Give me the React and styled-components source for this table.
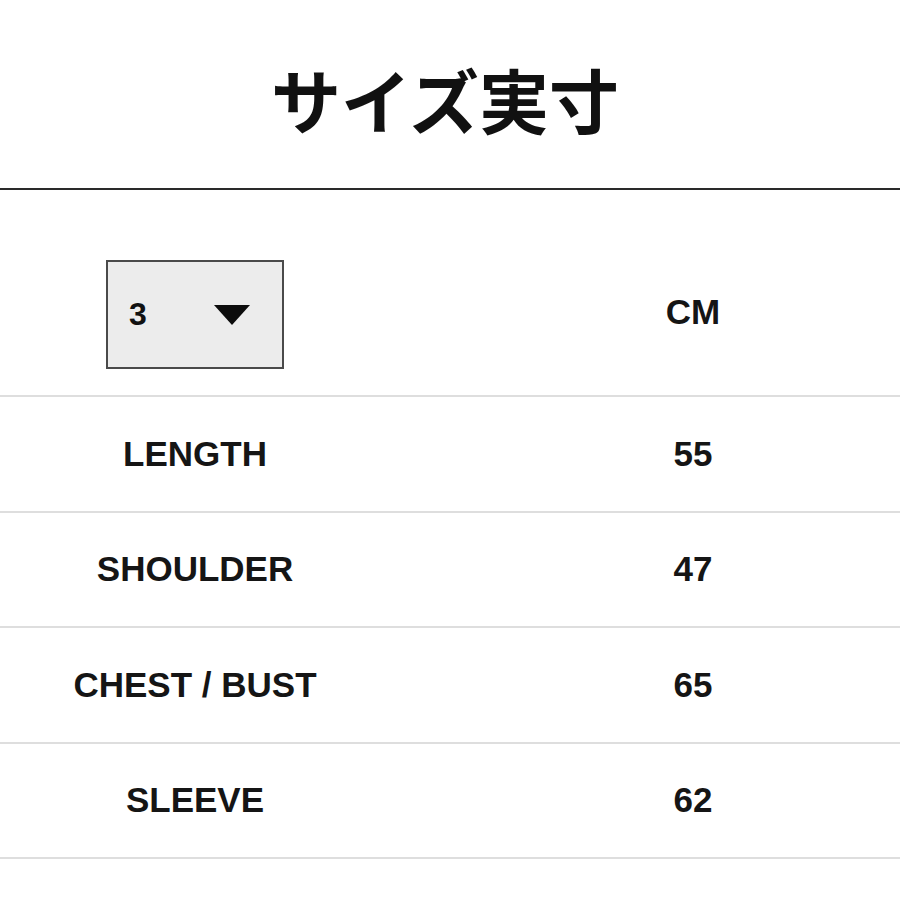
import React from "react";
import styled, { createGlobalStyle } from "styled-components";

const Global = createGlobalStyle`
  html, body { margin: 0; padding: 0; background: #ffffff; }
  body { overflow: hidden; font-family: "Liberation Sans", Arial, sans-serif; }
`;

const Page = styled.div`
  width: 900px;
  height: 900px;
  overflow: hidden;
  background: #ffffff;
  color: #111111;
`;

const TitleBar = styled.header`
  display: flex;
  align-items: center;
  justify-content: center;
  border-bottom: 2px solid #2a2a2a;
  box-sizing: border-box;
  height: 190px;
  padding-right: 10px;
`;

const Title = styled.h1`
  margin: 0;
  font-family: "Liberation Sans", "Noto Sans CJK JP", sans-serif;
  font-weight: 700;
  font-size: 70px;
  line-height: 1;
  padding-top: 22px;
`;

const Table = styled.div`
  display: grid;
  grid-template-columns: 390px 606px;
  width: 996px;
`;

const Row = styled.div`
  display: contents;
`;

const Cell = styled.div`
  height: ${(p) => p.$h}px;
  box-sizing: border-box;
  border-bottom: 2px solid #dedede;
  display: flex;
  align-items: center;
  justify-content: center;
  font-weight: 700;
  font-size: 35px;
  color: #151515;
  padding-top: ${(p) => p.$pt || 0}px;
`;

const Select = styled.div`
  width: 178px;
  height: 109px;
  box-sizing: border-box;
  border: 2px solid #4a4a4a;
  background: #ececec;
  display: flex;
  align-items: center;
  padding-left: 21px;
  gap: 67px;
  font-size: 32px;
  font-weight: 700;
  color: #111;
`;

const Arrow = styled.span`
  width: 0;
  height: 0;
  border-left: 18px solid transparent;
  border-right: 18px solid transparent;
  border-top: 20px solid #0c0c0c;
`;

const rows = [
  ["LENGTH", "55"],
  ["SHOULDER", "47"],
  ["CHEST / BUST", "65"],
  ["SLEEVE", "62"],
];

export default function App() {
  return (
    <Page>
      <Global />
      <TitleBar>
        <Title>サイズ実寸</Title>
      </TitleBar>
      <Table>
        <Row>
          <Cell $h={207} $pt={44}>
            <Select>
              <span>3</span>
              <Arrow />
            </Select>
          </Cell>
          <Cell $h={207} $pt={38}>CM</Cell>
        </Row>
        {rows.map(([k, v]) => (
          <Row key={k}>
            <Cell $h={115.5}>{k}</Cell>
            <Cell $h={115.5}>{v}</Cell>
          </Row>
        ))}
      </Table>
    </Page>
  );
}
